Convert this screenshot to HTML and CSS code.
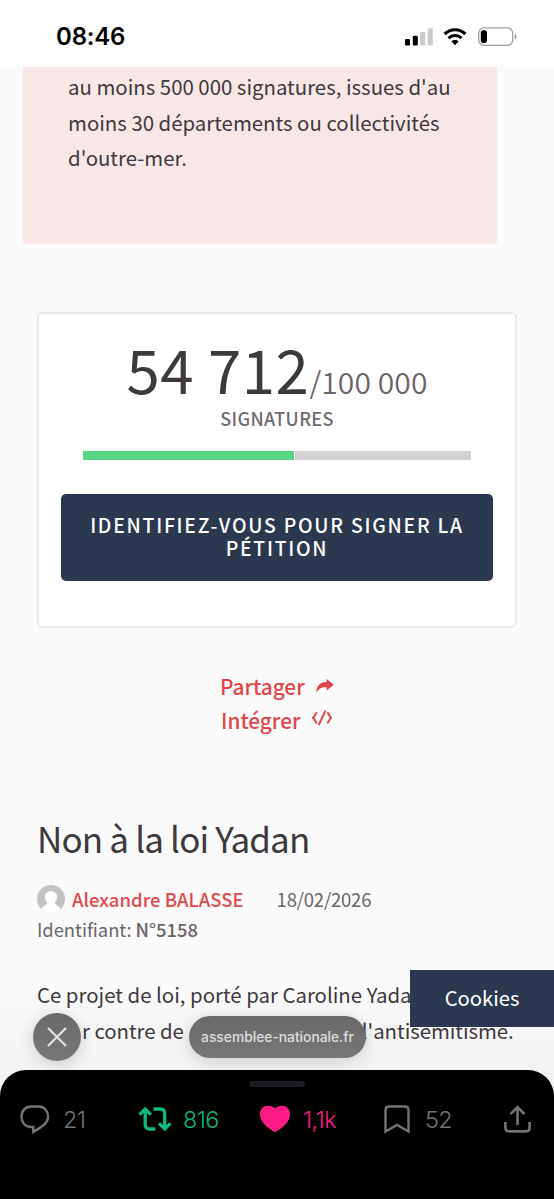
FILE: index.html
```html
<!DOCTYPE html>
<html lang="fr">
<head>
<meta charset="utf-8">
<title>Non à la loi Yadan</title>
<link rel="stylesheet" href="styles.css">
</head>
<body>
<div class="screen">
  <header class="status">
    <span class="time">08:46</span>
    <span class="ghost">Post</span>
    <span class="indicators">
      <svg class="signal" width="28" height="18" viewBox="0 0 28 18">
        <rect x="0" y="11" width="5" height="6.5" rx="1.3"/>
        <rect x="7.8" y="7.7" width="5" height="9.8" rx="1.3"/>
        <rect x="15.2" y="4" width="5" height="13.5" rx="1.3" class="off"/>
        <rect x="22.8" y="0.3" width="5" height="17.2" rx="1.3" class="off"/>
      </svg>
      <svg class="wifi" width="24" height="18" viewBox="0 0 24 18">
        <path d="M1.6 6C7.4.3 16.6.3 22.4 6" fill="none" stroke="#000" stroke-width="3.2"/>
        <path d="M5.5 10.2C9.2 6.6 14.8 6.6 18.5 10.2" fill="none" stroke="#000" stroke-width="3"/>
        <path d="M8.3 13.3C10.4 11.4 13.6 11.4 15.7 13.3L12 17.2Z"/>
      </svg>
      <svg class="battery" width="40" height="20" viewBox="0 0 40 20">
        <rect x=".7" y=".9" width="34" height="17.4" rx="5.3" fill="none" stroke="#a0a0a0" stroke-width="1.3"/>
        <rect x="2.8" y="3.3" width="6.2" height="12.6" rx="2.6"/>
        <path d="M36.8 6.8C39 7.8 39 11.4 36.8 12.4Z" fill="#999"/>
      </svg>
    </span>
  </header>

  <main class="page">
    <section class="notice">
      <p>au moins 500 000 signatures, issues d'au<br>moins 30 départements ou collectivités<br>d'outre-mer.</p>
    </section>

    <section class="card">
      <div class="count"><span class="done">54 712</span><span class="goal">/100 000</span></div>
      <div class="label">SIGNATURES</div>
      <div class="progress"><div class="bar" style="width:54.7%"></div></div>
      <a class="sign">IDENTIFIEZ-VOUS POUR SIGNER LA<br>PÉTITION</a>
    </section>

    <nav class="links">
      <a class="share">Partager
        <svg width="18" height="14" viewBox="0 0 18 14"><path d="M10.6 0L17.8 5.7L10.6 11.6V8.4C6 8 3 9.3.3 13.8C.1 7.2 4 3.1 10.6 3Z" fill="currentColor"/></svg>
      </a>
      <a class="embed">Intégrer
        <svg width="20" height="16" viewBox="0 0 20 16" fill="none" stroke="currentColor" stroke-width="2"><path d="M5 2.5C2.6 3.8 3.3 6.3 1 7.8C3.3 9.3 2.6 11.8 5 13.1M15.2 2.5C17.6 3.8 16.9 6.3 19.2 7.8C16.9 9.3 17.6 11.8 15.2 13.1M13.5.6L6.7 15.2"/></svg>
      </a>
    </nav>

    <article class="petition">
      <h1>Non à la loi Yadan</h1>
      <div class="author">
        <svg class="avatar" width="28" height="28" viewBox="0 0 28 28"><defs><clipPath id="disc"><circle cx="14" cy="14" r="14"/></clipPath></defs><g clip-path="url(#disc)"><rect width="28" height="28" fill="#c2c2c2"/><path d="M14 6.3C9.8 6.3 8 9 8 12C8 14.5 9 16.3 10.2 17.5C10.4 20 4 20.5 3.5 28H24.5C24 20.5 17.6 20 17.8 17.5C19 16.3 20 14.5 20 12C20 9 18.2 6.3 14 6.3Z" fill="#fff"/></g></svg>
        <a class="name">Alexandre BALASSE</a>
        <time>18/02/2026</time>
      </div>
      <div class="ident">Identifiant: <b>N°5158</b></div>
      <div class="text">
        <div class="line first">Ce projet de loi, porté par Caroline Yada</div>
        <div class="line second"><span class="left">r contre de</span><span class="right">l'antisémitisme.</span></div>
      </div>
    </article>
  </main>

  <div class="cookies">Cookies</div>
  <div class="close"><svg width="20" height="20" viewBox="0 0 20 20"><path d="M1 1L19 19M19 1L1 19" stroke="#e4e4e4" stroke-width="2.2"/></svg></div>
  <div class="domain">assemblee-nationale.fr</div>

  <footer class="sheet">
    <div class="grip"></div>
    <div class="actions">
      <span class="action reply"><svg width="30" height="29" viewBox="0 0 30 29"><path d="M11.2 1.5H18.8C24.5 1.5 28.1 6 28.1 11.5C28.1 19 20.5 22.3 13.3 27V22H11C5 22 1.5 17.3 1.5 11.5C1.5 6 5.4 1.5 11.2 1.5Z" fill="none" stroke="currentColor" stroke-width="2.4"/></svg><span>21</span></span>
      <span class="action repost"><svg width="34" height="26" viewBox="0 0 34 26" fill="none" stroke="currentColor" stroke-width="3.3"><path d="M1.5 8.7L7.2 3L12.9 8.7M7.2 4V18.5C7.2 21.4 8.6 23 11.7 23H17.3M15.5 3H22C25.2 3 26.7 4.6 26.7 7.5V22M21 17.3L26.7 23L32.4 17.3"/></svg><span>816</span></span>
      <span class="action like"><svg width="30" height="28" viewBox="0 0 30 28"><path d="M15 27.3C7.4 23 0 17 0 9.3C0 4 3.5.8 7.7.8C11 .8 13.4 1.6 15 3.6C16.6 1.6 19 .8 22.3.8C26.5.8 30 4 30 9.3C30 17 22.6 23 15 27.3Z" fill="currentColor"/></svg><span>1,1k</span></span>
      <span class="action save"><svg width="26" height="29" viewBox="0 0 26 29"><path d="M1.5 26.5V5C1.5 2.5 2.7 1.5 5 1.5H21C23.3 1.5 24.5 2.5 24.5 5V26.5L13 20Z" fill="none" stroke="currentColor" stroke-width="2.4"/></svg><span>52</span></span>
      <span class="action send"><svg width="27" height="28" viewBox="0 0 27 28" fill="none" stroke="currentColor" stroke-width="2.6"><path d="M13.5 20V2.5M6.5 9.2L13.5 2.2L20.5 9.2M1.4 17V22.5C1.4 25.3 2.5 26.4 5.2 26.4H21.8C24.5 26.4 25.6 25.3 25.6 22.5V17"/></svg></span>
    </div>
  </footer>
</div>
</body>
</html>
```
FILE: styles.css
```css
* { box-sizing: border-box; }
body { margin: 0; background: #fafafa; }
.screen {
  position: relative;
  width: 554px;
  height: 1199px;
  overflow: hidden;
  background: linear-gradient(#fafafa 0, #fafafa 980px, #f3f3f3 1070px);
  font-family: "Noto Sans CJK SC", "Noto Sans", sans-serif;
  color: #3d393c;
}
svg { display: block; flex: none; }
.status {
  display: grid;
  grid-template-columns: 194px 168px 1fr;
  align-items: center;
  height: 67px;
  padding: 7px 0 0 56px;
  background: #fdfdfd;
  font-family: Inter, sans-serif;
}
.time { font-weight: 600; font-size: 24px; line-height: 30px; letter-spacing: -.2px; color: #000; white-space: nowrap; }
.ghost { font-size: 23px; font-weight: 700; color: #fff; line-height: 30px; }
.indicators { display: flex; align-items: center; margin-left: -13px; }
.off { fill: #cacaca; }
.wifi { margin-left: 10px; }
.battery { margin-left: 11px; }
.page { display: flex; flex-direction: column; }
.notice {
  width: 474px;
  height: 177px;
  margin-left: 23px;
  padding: 2px 0 0 45px;
  background: #f7e8e7;
  font-size: 20.4px;
  line-height: 35.5px;
  white-space: nowrap;
}
.notice p { margin: 0; }
.card {
  display: flex;
  flex-direction: column;
  align-items: center;
  width: 480px;
  height: 316px;
  margin: 68px 0 0 37px;
  padding: 23px 22px 0;
  background: #fff;
  border: 2px solid #ebebeb;
  border-radius: 6px;
}
.count { display: flex; align-items: baseline; height: 62px; line-height: 62px; white-space: nowrap; }
.done { font-size: 60px; letter-spacing: .5px; }
.goal { font-size: 30px; font-weight: 350; letter-spacing: .1px; color: #6b6468; }
.label { font-size: 18px; font-weight: 500; line-height: 18px; letter-spacing: .35px; color: #706a6d; margin-top: 10px; }
.progress { width: 388px; height: 9px; margin-top: 24px; background: #d3d1d4; }
.bar { height: 9px; background: #57d685; border-right: 1px solid #fff; }
.sign {
  width: 432px;
  height: 87px;
  margin-top: 34px;
  padding-top: 20px;
  border-radius: 5px;
  background: #2c3850;
  color: #fff;
  font-size: 19.4px;
  font-weight: 500;
  line-height: 22.5px;
  letter-spacing: 1.75px;
  text-align: center;
  white-space: nowrap;
}
.links { display: flex; flex-direction: column; padding: 41px 0 0 220px; color: #df474b; }
.links a { display: flex; align-items: center; height: 34px; font-size: 20.8px; font-weight: 500; line-height: 34px; }
.links .embed { padding-left: 1px; }
.share svg { margin-left: 11px; }
.embed svg { margin-left: 12px; margin-top: -4px; }
.petition { padding: 79px 0 0 37px; white-space: nowrap; }
h1 { margin: 0; font-size: 35px; font-weight: 400; line-height: 44px; letter-spacing: -.85px; }
.author { display: flex; align-items: center; height: 30px; margin-top: 24px; font-size: 18.5px; line-height: 30px; }
.name { margin-left: 7px; color: #e04a4e; font-weight: 500; }
time { margin-left: 33px; color: #6c666a; letter-spacing: -.2px; }
.ident { font-size: 18.4px; line-height: 30px; color: #6c666a; letter-spacing: -.05px; }
.ident b { font-weight: 500; }
.text { margin-top: 33px; font-size: 20.4px; line-height: 35.5px; }
.line { display: flex; height: 35.5px; }
.second { padding-left: 45px; letter-spacing: -.05px; }
.right { margin-left: 178px; }
.cookies {
  position: absolute;
  right: 0;
  top: 970px;
  width: 144px;
  height: 57px;
  background: #2c3850;
  color: #fff;
  font-size: 20.2px;
  line-height: 55px;
  text-align: center;
}
.close, .domain {
  position: absolute;
  display: flex;
  align-items: center;
  justify-content: center;
  background: linear-gradient(#696969, #777);
  box-shadow: 0 3px 16px rgba(0, 0, 0, .16);
}
.close { left: 33px; top: 1013px; width: 48px; height: 48px; border-radius: 24px; }
.domain {
  left: 189px;
  top: 1016px;
  width: 177px;
  height: 42px;
  border-radius: 21px;
  color: #dedede;
  font: 500 13.8px/42px Inter, sans-serif;
}
.sheet {
  position: absolute;
  left: 0;
  right: 0;
  top: 1070px;
  height: 129px;
  border-radius: 26px 26px 0 0;
  background: #000;
}
.grip { width: 56px; height: 6px; margin: 11px auto 0; border-radius: 3px; background: #1b1d20; }
.actions {
  display: grid;
  grid-template-columns: 118px 122px 124px 120px 1fr;
  padding: 17px 0 0 20px;
  font: 300 23.4px/30px Inter, sans-serif;
}
.action { display: flex; align-items: center; height: 30px; color: #717579; }
.action span { margin: 2px 0 0 13px; letter-spacing: -.6px; }
.repost { color: #0fb87c; }
.repost span { margin-left: 11px; }
.like { color: #fb1b83; }
.like span { margin-left: 13px; }
.save span { margin-left: 15px; }
```
